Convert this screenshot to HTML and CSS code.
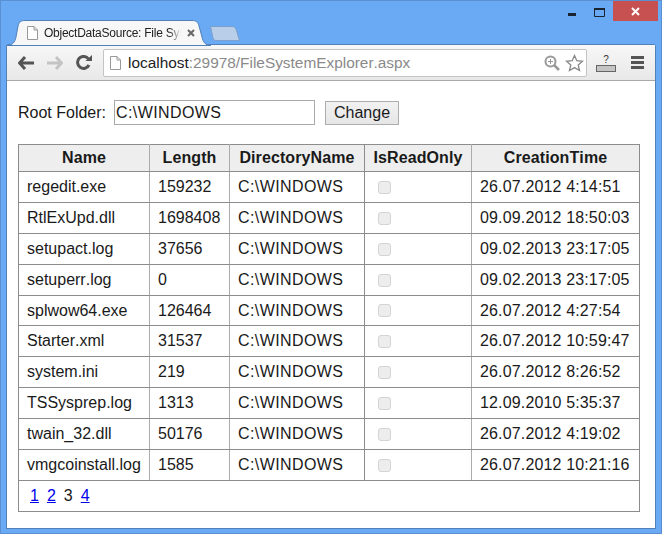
FILE: index.html
```html
<!DOCTYPE html>
<html lang="en">
<head>
<meta charset="UTF-8" />
<title>ObjectDataSource: File System Explorer</title>
<link rel="stylesheet" href="styles.css">
</head>
<body>
<div class="titlebar">
  <div class="tabs">
    <div class="tab">
      <svg class="tab-bg" width="204" height="26" viewBox="0 0 204 26"><path d="M0 25.5 C6 25 8 22 9 17 L11 6 C12 2 14 .5 18 .5 L185 .5 C189 .5 191 2 192 6 L195 17 C196 22 198 25 204 25.5 Z" fill="#f7f7f7" stroke="#4f80b8" stroke-width="1"/></svg>
      <svg class="page-icon" width="11" height="14" viewBox="0 0 11 14"><path d="M.5 .5 H7 L10.5 4 V13.5 H.5 Z M7 .5 V4 H10.5" fill="#fff" stroke="#999"/></svg>
      <span class="tab-title">ObjectDataSource: File Sys</span>
      <svg class="tab-close" width="8" height="8" viewBox="0 0 8 8"><path d="M1 1 L7 7 M7 1 L1 7" stroke="#666" stroke-width="2"/></svg>
    </div>
    <svg class="new-tab" width="30" height="15" viewBox="0 0 30 15"><path d="M.5 .5 H22 C24 .5 25 1.5 26 3 L29.5 14.5 H6 C4 14.5 3.5 13.5 3 12 Z" fill="#b9cfe9" stroke="#7ba0cc"/></svg>
  </div>
  <div class="win-controls">
    <svg class="win-min" width="8" height="3" viewBox="0 0 8 3"><rect width="8" height="3" fill="#1a2430"/></svg>
    <svg class="win-max" width="11" height="9" viewBox="0 0 11 9"><path d="M.5 .5 H10.5 V8.5 H.5 Z" fill="none" stroke="#1a2430"/><rect width="11" height="2" fill="#1a2430"/></svg>
    <div class="win-close"><svg width="9" height="9" viewBox="0 0 9 9"><path d="M1 1 L8 8 M8 1 L1 8" stroke="#fff" stroke-width="2"/></svg></div>
  </div>
</div>

<div class="window">
  <div class="toolbar">
    <svg class="nav-icon" width="16" height="14" viewBox="0 0 16 14"><path d="M7 1 L1.5 7 L7 13 M2 7 H16" fill="none" stroke="#555" stroke-width="3"/></svg>
    <svg class="nav-icon" width="16" height="14" viewBox="0 0 16 14"><path d="M9 1 L14.500 7 L9 13 M14 7 H0" fill="none" stroke="#c4c4c4" stroke-width="3"/></svg>
    <svg class="nav-icon" width="16" height="15" viewBox="0 0 16 15"><path d="M13 10 A6 6 0 1 1 12.500 4" fill="none" stroke="#555" stroke-width="3"/><path d="M9.500 6 H16 V0 Z" fill="#555"/></svg>
    <div class="omnibox">
      <svg class="page-icon-small" width="11" height="14" viewBox="0 0 11 14"><path d="M.5 .5 H7 L10.5 4 V13.5 H.5 Z M7 .5 V4 H10.5" fill="#fff" stroke="#999"/></svg>
      <span class="url"><span class="url-host">localhost</span>:29978/FileSystemExplorer.aspx</span>
      <svg class="zoom-icon" width="16" height="16" viewBox="0 0 16 16"><circle cx="6.500" cy="6.500" r="5" fill="none" stroke="#999" stroke-width="2"/><path d="M10 10 L15 15" stroke="#999" stroke-width="2.500"/><path d="M4 6.500 H9 M6.500 4 V9" stroke="#999"/></svg>
      <svg width="19" height="18" viewBox="0 0 19 18"><path d="M9.500 1.500 L11.800 6.700 L17.500 7.300 L13.200 11 L14.500 16.500 L9.500 13.600 L4.500 16.500 L5.800 11 L1.500 7.300 L7.200 6.700 Z" fill="#fff" stroke="#888" stroke-width="1.300"/></svg>
    </div>
    <div class="ext-icon">
      <span class="ext-mark">?</span>
      <span class="ext-bar"></span>
    </div>
    <svg class="menu-icon" width="13" height="13" viewBox="0 0 13 13"><path d="M0 1.500 H13 M0 6.500 H13 M0 11.500 H13" stroke="#555" stroke-width="3"/></svg>
  </div>

  <div class="content">
    <form class="root-form">
      <label for="rootFolder">Root Folder:</label>
      <input id="rootFolder" type="text" value="C:\WINDOWS" />
      <button type="button">Change</button>
    </form>

    <table>
      <colgroup>
        <col class="col-name"><col class="col-length"><col class="col-dir"><col class="col-readonly"><col class="col-time">
      </colgroup>
      <thead>
        <tr><th>Name</th><th>Length</th><th>DirectoryName</th><th>IsReadOnly</th><th>CreationTime</th></tr>
      </thead>
      <tbody>
        <tr><td>regedit.exe</td><td>159232</td><td>C:\WINDOWS</td><td><input type="checkbox" disabled></td><td>26.07.2012 4:14:51</td></tr>
        <tr><td>RtlExUpd.dll</td><td>1698408</td><td>C:\WINDOWS</td><td><input type="checkbox" disabled></td><td>09.09.2012 18:50:03</td></tr>
        <tr><td>setupact.log</td><td>37656</td><td>C:\WINDOWS</td><td><input type="checkbox" disabled></td><td>09.02.2013 23:17:05</td></tr>
        <tr><td>setuperr.log</td><td>0</td><td>C:\WINDOWS</td><td><input type="checkbox" disabled></td><td>09.02.2013 23:17:05</td></tr>
        <tr><td>splwow64.exe</td><td>126464</td><td>C:\WINDOWS</td><td><input type="checkbox" disabled></td><td>26.07.2012 4:27:54</td></tr>
        <tr><td>Starter.xml</td><td>31537</td><td>C:\WINDOWS</td><td><input type="checkbox" disabled></td><td>26.07.2012 10:59:47</td></tr>
        <tr><td>system.ini</td><td>219</td><td>C:\WINDOWS</td><td><input type="checkbox" disabled></td><td>26.07.2012 8:26:52</td></tr>
        <tr><td>TSSysprep.log</td><td>1313</td><td>C:\WINDOWS</td><td><input type="checkbox" disabled></td><td>12.09.2010 5:35:37</td></tr>
        <tr><td>twain_32.dll</td><td>50176</td><td>C:\WINDOWS</td><td><input type="checkbox" disabled></td><td>26.07.2012 4:19:02</td></tr>
        <tr><td>vmgcoinstall.log</td><td>1585</td><td>C:\WINDOWS</td><td><input type="checkbox" disabled></td><td>26.07.2012 10:21:16</td></tr>
      </tbody>
      <tfoot>
        <tr><td colspan="5" class="pager"><a href="#">1</a><a href="#">2</a><span>3</span><a href="#">4</a></td></tr>
      </tfoot>
    </table>
  </div>
</div>
</body>
</html>
```

FILE: styles.css
```css
html, body {
  margin: 0;
  height: 100%;
}

body {
  display: flex;
  flex-direction: column;
  box-sizing: border-box;
  height: 534px;
  overflow: hidden;
  font-family: "Liberation Sans", Arial, sans-serif;
  font-kerning: none;
  background-color: #6aa9f3;
  border: 1px solid #5b8fd0;
  padding-bottom: 5px;
  color: #1a1a1a;
}

.titlebar {
  display: flex;
  justify-content: space-between;
  height: 44px;
  flex-shrink: 0;
}

.tabs {
  display: flex;
  align-items: flex-end;
  padding-left: 6px;
}

.tab {
  position: relative;
  display: flex;
  align-items: center;
  box-sizing: border-box;
  width: 204px;
  height: 26px;
  padding-left: 20px;
  margin-bottom: -1px;
  z-index: 1;
}

.tab-bg {
  position: absolute;
  left: 0;
  top: 0;
}

.page-icon, .tab-title, .tab-close {
  position: relative;
}

.tab-title {
  flex: none;
  width: 137px;
  margin-left: 6px;
  white-space: nowrap;
  font-size: 12px;
  letter-spacing: -0.25px;
  color: #222;
  -webkit-mask-image: linear-gradient(to right, #000 125px, transparent 137px);
  mask-image: linear-gradient(to right, #000 125px, transparent 137px);
}

.tab-close {
  flex: none;
  margin-left: 6px;
}

.new-tab {
  margin: 0 0 4px -1px;
}

.win-controls {
  display: flex;
  align-items: flex-start;
  margin-right: 3px;
}

.win-min {
  margin: 12px 18px 0 0;
}

.win-max {
  margin: 7px 8px 0 0;
}

.win-close {
  display: flex;
  align-items: center;
  justify-content: center;
  width: 45px;
  height: 20px;
  background-color: #c75050;
}

.window {
  flex: 1;
  display: flex;
  flex-direction: column;
  margin: 0 6px;
  background-color: #fff;
  border-radius: 2px 2px 0 0;
  box-shadow: 0 0 0 1px #4f80b8;
}

.toolbar {
  display: flex;
  align-items: center;
  box-sizing: border-box;
  height: 36px;
  padding: 0 11px 0 11px;
  background: linear-gradient(#f7f7f7, #e8e8e8);
  border-bottom: 1px solid #a9a9a9;
}

.nav-icon {
  margin-right: 13px;
}

.omnibox {
  flex: 1;
  display: flex;
  align-items: center;
  height: 26px;
  padding: 0 2px 0 6px;
  margin-left: -2px;
  background-color: #fff;
  border: 1px solid #c4c4c4;
  border-radius: 2px;
}

.page-icon-small {
  margin-right: 7px;
}

.url {
  flex: 1;
  font-size: 15.4px;
  color: #8a8a8a;
}

.url-host {
  color: #222;
}

.zoom-icon {
  margin-right: 5px;
}

.ext-icon {
  display: flex;
  flex-direction: column;
  align-items: center;
  width: 20px;
  margin: 0 15px 0 9px;
}

.ext-mark {
  font-size: 10px;
  line-height: 11px;
  color: #333;
}

.ext-bar {
  width: 18px;
  height: 5px;
  background-color: #c4c4c4;
  border: 1px solid #666;
}

.content {
  padding: 19px 14px 0 11px;
  font-size: 16px;
}

.root-form {
  display: flex;
  align-items: center;
  margin-bottom: 19px;
}

.root-form input {
  box-sizing: border-box;
  width: 201px;
  height: 25px;
  margin: 0 10px 0 8px;
  padding: 0 1px;
  font: inherit;
  letter-spacing: 0.4px;
  color: #1a1a1a;
  background-color: #fff;
  border: 1px solid #a9a9a9;
}

.root-form button {
  box-sizing: border-box;
  width: 74px;
  height: 24px;
  padding: 0;
  font: inherit;
  color: #1a1a1a;
  background: linear-gradient(#f2f2f2, #e6e6e6);
  border: 1px solid #adadad;
}

table {
  width: 621px;
  table-layout: fixed;
  border-collapse: collapse;
}

.col-name { width: 131px; }
.col-length { width: 80px; }
.col-dir { width: 135px; }
.col-readonly { width: 107px; }
.col-time { width: 168px; }

th, td {
  box-sizing: border-box;
  height: 31px;
  padding: 0 8px;
  text-align: left;
  white-space: nowrap;
  border-top: 1px solid #8c8c8c;
  border-bottom: 1px solid #8c8c8c;
  border-left: 1px solid #ababab;
  border-right: 1px solid #ababab;
}

th {
  height: 27px;
  padding: 0;
  text-align: center;
  letter-spacing: 0.1px;
  background-color: #eeeeee;
}

tbody tr:nth-child(5) td {
  height: 30px;
}

tr > :first-child {
  border-left-color: #8c8c8c;
}

tr > :last-child {
  border-right-color: #8c8c8c;
}

tr > :nth-child(3) {
  border-right-color: #8c8c8c;
}

tbody td:nth-child(3) {
  letter-spacing: 0.4px;
}

tbody td:nth-child(5) {
  letter-spacing: 0.15px;
}

td input {
  appearance: none;
  display: block;
  box-sizing: border-box;
  width: 13px;
  height: 13px;
  margin: 0 0 0 5px;
  background-color: #ededed;
  border: 1px solid #d4d4d4;
  border-radius: 3px;
}

.pager {
  padding: 0 0 0 11px;
}

.pager a, .pager span {
  margin-right: 8px;
}

.pager a {
  color: #0000ee;
}
```
